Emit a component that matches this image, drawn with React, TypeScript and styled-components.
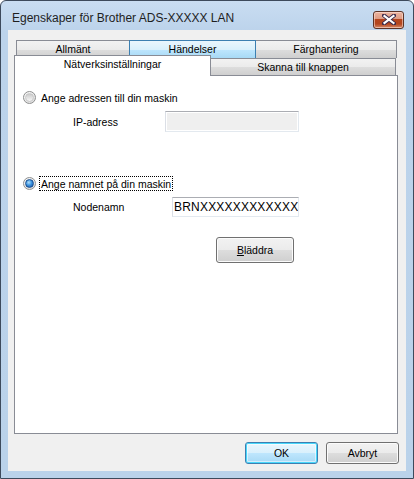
import React from 'react'
import styled, { createGlobalStyle, css } from 'styled-components'

const Global = createGlobalStyle`
  html, body {
    margin: 0;
    padding: 0;
    width: 414px;
    height: 479px;
    overflow: hidden;
    background: #ffffff;
  }
  * {
    box-sizing: border-box;
  }
`

const Window = styled.div`
  width: 414px;
  height: 479px;
  display: flex;
  flex-direction: column;
  border: 1px solid #3d4a5c;
  border-radius: 6px 6px 0 0;
  background: linear-gradient(180deg, #c9ddf2 0%, #bcd3eb 30px, #bad2ea 100%);
  padding: 0 7px 7px 7px;
  font-family: 'Liberation Sans', Arial, sans-serif;
  font-size: 10.5px;
  color: #000;
`

const TitleBar = styled.div`
  height: 29px;
  display: flex;
  align-items: center;
  justify-content: space-between;
  padding: 0 2px 0 4px;
`

const Title = styled.div`
  font-size: 12px;
  color: #1e1e1e;
  margin-top: 4px;
`

const CloseButton = styled.div`
  width: 31px;
  height: 18px;
  margin-top: 8px;
  border: 1px solid #5c3326;
  border-radius: 3px;
  display: flex;
  align-items: center;
  justify-content: center;
  background: linear-gradient(
    180deg,
    #eab3a0 0%,
    #dd9a82 45%,
    #b5451e 46%,
    #b3461f 75%,
    #d68a6a 100%
  );
  box-shadow: inset 0 0 0 1px rgba(255, 230, 220, 0.55);
`

const Client = styled.div`
  flex: 1;
  display: flex;
  flex-direction: column;
  background: #f0f0f0;
  padding: 10px 8px 0 6px;
`

const TabStrip = styled.div`
  display: flex;
  flex-direction: column;
`

const TabRow = styled.div<{ $front?: boolean }>`
  display: flex;
  align-items: flex-end;
  height: ${p => (p.$front ? '17px' : '18px')};
  padding-left: ${p => (p.$front ? '0' : '2px')};
  position: relative;
  z-index: ${p => (p.$front ? 2 : 1)};
`

const Tab = styled.div<{ $w: number; $state?: 'normal' | 'hover' | 'active' }>`
  width: ${p => p.$w}px;
  height: 100%;
  display: flex;
  align-items: center;
  justify-content: center;
  border: 1px solid #898c95;
  border-bottom: none;
  margin-left: -1px;
  padding-bottom: 1px;
  background: linear-gradient(180deg, #f2f2f2 0%, #ebebeb 50%, #dddddd 51%, #cfcfcf 100%);
  ${p =>
    p.$state === 'hover' &&
    css`
      border-color: #3c7fb1;
      border-bottom: none;
      position: relative;
      z-index: 1;
      background: linear-gradient(180deg, #eaf6fd 0%, #d9f0fc 50%, #bee6fd 51%, #a7d9f5 100%);
    `}
  ${p =>
    p.$state === 'active' &&
    css`
      height: 21px;
      margin-bottom: -1px;
      margin-left: 0;
      background: #ffffff;
      align-items: flex-start;
      padding-top: 2px;
      position: relative;
      z-index: 2;
    `}
  &:first-child {
    margin-left: 0;
  }
`

const Panel = styled.div`
  width: 384px;
  height: 359px;
  background: #ffffff;
  border: 1px solid #898c95;
  display: flex;
  flex-direction: column;
  padding-left: 8px;
  position: relative;
  z-index: 1;
`

const RadioRow = styled.div<{ $top: number }>`
  display: flex;
  align-items: center;
  height: 15px;
  margin-top: ${p => p.$top}px;
`

const Radio = styled.span<{ $checked?: boolean }>`
  width: 13px;
  height: 13px;
  border-radius: 50%;
  border: 1px solid #8e8f8f;
  background: radial-gradient(circle at 40% 35%, #ffffff 0%, #f4f4f4 40%, #d0d0d0 100%);
  display: flex;
  align-items: center;
  justify-content: center;
  flex-shrink: 0;
  &::after {
    content: '';
    width: 7px;
    height: 7px;
    border-radius: 50%;
    border: 1px solid ${p => (p.$checked ? '#1b4f8e' : '#c7c7c7')};
    background: ${p =>
      p.$checked
        ? 'radial-gradient(circle at 40% 35%, #b4e0fb 0%, #3d95e0 45%, #14489a 100%)'
        : 'linear-gradient(180deg, #cbcbcb 0%, #f6f6f6 100%)'};
  }
`

const RadioLabel = styled.span<{ $focused?: boolean }>`
  margin-left: 3px;
  padding: 0 1px;
  height: 15px;
  line-height: 14px;
  white-space: nowrap;
  border: 1px dotted ${p => (p.$focused ? '#000' : 'transparent')};
`

const FieldRow = styled.div<{ $top: number; $labelWidth: number }>`
  display: flex;
  align-items: center;
  margin-top: ${p => p.$top}px;
  padding-left: 50px;
  & > span {
    width: ${p => p.$labelWidth}px;
  }
`

const TextBox = styled.div<{ $w: number; $h: number; $disabled?: boolean }>`
  width: ${p => p.$w}px;
  height: ${p => p.$h}px;
  border: 1px solid #e3e9ef;
  border-top-color: #abadb3;
  border-left-color: #dbdfe6;
  background: ${p => (p.$disabled ? '#efefef' : '#ffffff')};
  padding: 0 0 0 1px;
  display: flex;
  align-items: center;
  overflow: hidden;
  white-space: nowrap;
  font-size: 12px;
  letter-spacing: 0.2px;
  ${p =>
    p.$disabled &&
    css`
      box-shadow: inset 0 0 0 1px #ffffff;
    `}
`

const ButtonRow = styled.div`
  display: flex;
  margin-top: 20px;
  padding-left: 193px;
`

const Button = styled.div<{ $w: number; $h: number; $default?: boolean }>`
  width: ${p => p.$w}px;
  height: ${p => p.$h}px;
  border: 1px solid #707070;
  border-radius: 3px;
  display: flex;
  align-items: center;
  justify-content: center;
  background: linear-gradient(180deg, #f2f2f2 0%, #ebebeb 50%, #dddddd 51%, #cfcfcf 100%);
  box-shadow: inset 0 0 0 1px #fbfbfb;
  ${p =>
    p.$default &&
    css`
      border-color: #3c7fb1;
      background: linear-gradient(180deg, #eaf6fd 0%, #d9f0fc 50%, #bee6fd 51%, #a7d9f5 100%);
      box-shadow: inset 0 0 0 1px #48d7fb, inset 0 0 0 2px rgba(255, 255, 255, 0.5);
    `}
  u {
    text-decoration: underline;
  }
`

const Footer = styled.div`
  display: flex;
  justify-content: flex-end;
  gap: 8px;
  margin-top: 8px;
  margin-right: -1px;
`

export default function App() {
  return (
    <>
      <Global />
      <Window>
        <TitleBar>
          <Title>Egenskaper för Brother ADS-XXXXX LAN</Title>
          <CloseButton>
            <svg width="14" height="11" viewBox="0 0 14 11">
              <path
                d="M2 1.5 L12 9.5 M12 1.5 L2 9.5"
                stroke="#3b2a4a"
                strokeWidth="4"
                strokeLinecap="square"
              />
              <path
                d="M2.5 2 L11.5 9 M11.5 2 L2.5 9"
                stroke="#ffffff"
                strokeWidth="2.2"
                strokeLinecap="square"
              />
            </svg>
          </CloseButton>
        </TitleBar>
        <Client>
          <TabStrip>
            <TabRow>
              <Tab $w={114}>Allmänt</Tab>
              <Tab $w={127} $state="hover">
                Händelser
              </Tab>
              <Tab $w={142}>Färghantering</Tab>
            </TabRow>
            <TabRow $front>
              <Tab $w={197} $state="active">
                Nätverksinställningar
              </Tab>
              <Tab $w={186}>Skanna till knappen</Tab>
            </TabRow>
          </TabStrip>
          <Panel>
            <RadioRow $top={14}>
              <Radio />
              <RadioLabel>Ange adressen till din maskin</RadioLabel>
            </RadioRow>
            <FieldRow $top={6} $labelWidth={92}>
              <span>IP-adress</span>
              <TextBox $w={134} $h={21} $disabled />
            </FieldRow>
            <RadioRow $top={44}>
              <Radio $checked />
              <RadioLabel $focused>Ange namnet på din maskin</RadioLabel>
            </RadioRow>
            <FieldRow $top={6} $labelWidth={99}>
              <span>Nodenamn</span>
              <TextBox $w={127} $h={20}>
                BRNXXXXXXXXXXXX
              </TextBox>
            </FieldRow>
            <ButtonRow>
              <Button $w={78} $h={26}>
                <span>
                  <u>B</u>läddra
                </span>
              </Button>
            </ButtonRow>
          </Panel>
          <Footer>
            <Button $w={73} $h={22} $default>
              OK
            </Button>
            <Button $w={73} $h={22}>
              Avbryt
            </Button>
          </Footer>
        </Client>
      </Window>
    </>
  )
}
